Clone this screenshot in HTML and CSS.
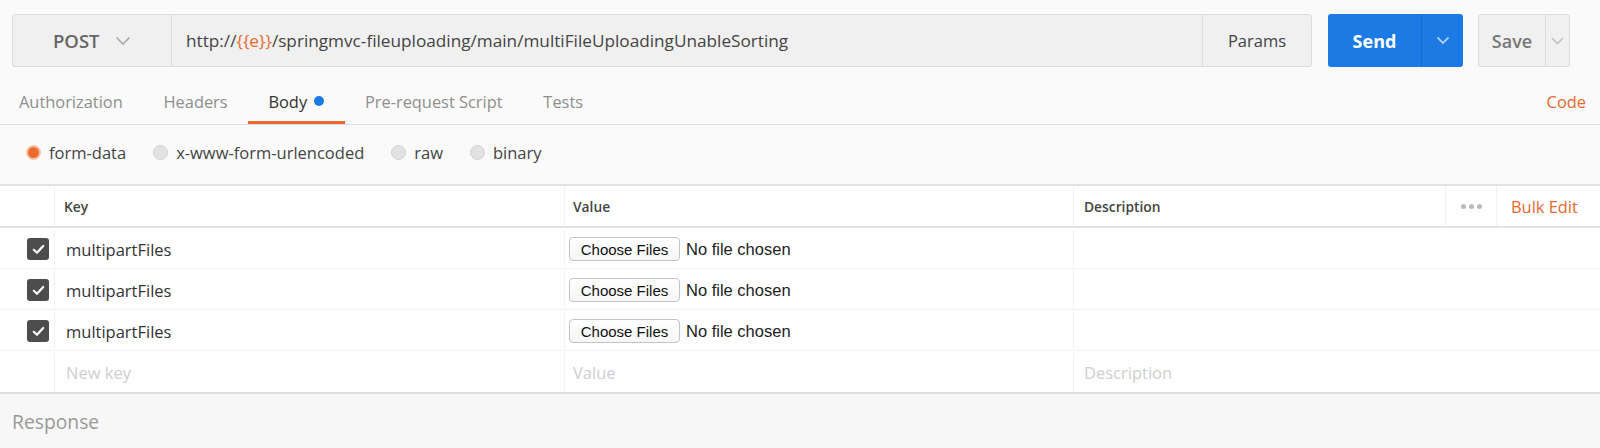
FILE: index.html
```html
<!DOCTYPE html>
<html>
<head>
<meta charset="utf-8">
<link rel="stylesheet" href="styles.css">
</head>
<body>
<div class="page">
  <div class="topbar">
    <div class="reqbar">
      <div class="method">POST <svg class="chev" width="16" height="10" viewBox="0 0 16 10"><path d="M1.5 1.5 L8 8 L14.5 1.5" fill="none" stroke="#aaa" stroke-width="1.6"/></svg></div>
      <div class="url">http://<span class="var">{{e}}</span>/springmvc-fileuploading/main/multiFileUploadingUnableSorting</div>
      <div class="params">Params</div>
    </div>
    <div class="send">
      <div class="send-main">Send</div>
      <div class="send-caret"><svg width="14" height="9" viewBox="0 0 14 9"><path d="M1.5 1.5 L7 7 L12.5 1.5" fill="none" stroke="#a9cdf5" stroke-width="1.8"/></svg></div>
    </div>
    <div class="save">
      <div class="save-main">Save</div>
      <div class="save-caret"><svg width="13" height="8" viewBox="0 0 13 8"><path d="M1 1 L6.5 6.5 L12 1" fill="none" stroke="#bbb" stroke-width="1.3"/></svg></div>
    </div>
  </div>

  <div class="tabs">
    <div class="tab">Authorization</div>
    <div class="tab">Headers</div>
    <div class="tab active">Body <span class="dot"></span></div>
    <div class="tab">Pre-request Script</div>
    <div class="tab">Tests</div>
    <div class="spacer"></div>
    <div class="code">Code</div>
  </div>

  <div class="radios">
    <div class="radio"><span class="circle on"></span>form-data</div>
    <div class="radio"><span class="circle"></span>x-www-form-urlencoded</div>
    <div class="radio"><span class="circle"></span>raw</div>
    <div class="radio"><span class="circle"></span>binary</div>
  </div>

  <div class="table">
    <div class="row head">
      <div class="c-check"></div>
      <div class="c-key">Key</div>
      <div class="c-val">Value</div>
      <div class="c-desc">Description</div>
      <div class="c-dots"><span></span><span></span><span></span></div>
      <div class="c-bulk">Bulk Edit</div>
    </div>
    <div class="row">
      <div class="c-check"><span class="cb"><svg width="13" height="11" viewBox="0 0 13 11"><path d="M1.8 5.8 L5 8.8 L11.2 2" fill="none" stroke="#fff" stroke-width="2.2" stroke-linecap="round" stroke-linejoin="round"/></svg></span></div>
      <div class="c-key">multipartFiles</div>
      <div class="c-val"><button class="choose">Choose Files</button><span class="nofile">No file chosen</span></div>
      <div class="c-desc"></div>
    </div>
    <div class="row">
      <div class="c-check"><span class="cb"><svg width="13" height="11" viewBox="0 0 13 11"><path d="M1.8 5.8 L5 8.8 L11.2 2" fill="none" stroke="#fff" stroke-width="2.2" stroke-linecap="round" stroke-linejoin="round"/></svg></span></div>
      <div class="c-key">multipartFiles</div>
      <div class="c-val"><button class="choose">Choose Files</button><span class="nofile">No file chosen</span></div>
      <div class="c-desc"></div>
    </div>
    <div class="row">
      <div class="c-check"><span class="cb"><svg width="13" height="11" viewBox="0 0 13 11"><path d="M1.8 5.8 L5 8.8 L11.2 2" fill="none" stroke="#fff" stroke-width="2.2" stroke-linecap="round" stroke-linejoin="round"/></svg></span></div>
      <div class="c-key">multipartFiles</div>
      <div class="c-val"><button class="choose">Choose Files</button><span class="nofile">No file chosen</span></div>
      <div class="c-desc"></div>
    </div>
    <div class="row last">
      <div class="c-check"></div>
      <div class="c-key ph">New key</div>
      <div class="c-val ph">Value</div>
      <div class="c-desc ph">Description</div>
    </div>
  </div>

  <div class="response">Response</div>
</div>
</body>
</html>
```

FILE: styles.css
```css
* { box-sizing: border-box; }
html, body { margin: 0; padding: 0; }
body {
  background: #fafafa;
  font-family: "Open Sans", "Noto Sans", sans-serif;
  color: #333;
  width: 1600px;
  height: 448px;
  overflow: hidden;
}
.page { display: flex; flex-direction: column; }

.topbar {
  display: flex;
  align-items: stretch;
  padding: 14px 30px 0 12px;
  height: 67px;
}
.reqbar {
  flex: 1;
  display: flex;
  border: 1px solid #dcdcdc;
  border-radius: 3px;
  background: #f0f0f0;
}
.method {
  width: 159px;
  display: flex;
  align-items: center;
  padding-left: 40px;
  font-size: 18.5px;
  font-weight: 600;
  color: #666;
  border-right: 1px solid #dcdcdc;
}
.chev { margin-left: 15px; }
.url {
  flex: 1;
  display: flex;
  align-items: center;
  padding-left: 14px;
  font-size: 17.2px;
  color: #444;
  white-space: nowrap;
}
.var { color: #e8692f; }
.params {
  width: 109px;
  display: flex;
  align-items: center;
  justify-content: center;
  border-left: 1px solid #dcdcdc;
  font-size: 16.5px;
  color: #444;
}
.send {
  margin-left: 16px;
  width: 135px;
  display: flex;
  background: #1b7ae4;
  border-radius: 3px;
  color: #fff;
}
.send-main {
  width: 94px;
  display: flex;
  align-items: center;
  justify-content: center;
  font-size: 18px;
  font-weight: 700;
  border-right: 1px solid #1869c4;
}
.send-caret {
  flex: 1;
  display: flex;
  align-items: center;
  justify-content: center;
}
.save {
  margin-left: 15px;
  width: 92px;
  display: flex;
  background: #f0f0f0;
  border: 1px solid #dcdcdc;
  border-radius: 3px;
}
.save-main {
  width: 67px;
  display: flex;
  align-items: center;
  justify-content: center;
  font-size: 18px;
  font-weight: 600;
  color: #777;
  border-right: 1px solid #dcdcdc;
}
.save-caret {
  flex: 1;
  display: flex;
  align-items: center;
  justify-content: center;
}

.tabs {
  display: flex;
  align-items: stretch;
  height: 58px;
  border-bottom: 1px solid #dedede;
  padding: 0 14px 0 0;
}
.tab {
  display: flex;
  align-items: center;
  padding: 14px 20.4px 0;
  font-size: 16.4px;
  color: #8f8f8f;
  border-bottom: 3px solid transparent;
}
.tab:first-child { padding-left: 19px; }
.tab.active { color: #333; border-bottom-color: #e8692f; }
.dot {
  display: inline-block;
  width: 10px;
  height: 10px;
  border-radius: 50%;
  background: #1a7be8;
  margin-left: 7px;
}
.spacer { flex: 1; }
.code {
  display: flex;
  align-items: center;
  padding-top: 11px;
  font-size: 16.4px;
  color: #e8692f;
}

.radios {
  display: flex;
  align-items: center;
  height: 59px;
  padding-left: 26px;
  padding-bottom: 5px;
  font-size: 16.5px;
  color: #444;
}
.radio {
  display: flex;
  align-items: center;
  margin-right: 27px;
}
.circle {
  width: 15px;
  height: 15px;
  border-radius: 50%;
  background: #e2e2e2;
  border: 1px solid #d2d2d2;
  margin-right: 8px;
}
.circle.on {
  background: #ee6b2f;
  border: 2px solid #f4c4a8;
}

.table {
  background: #fff;
  border-top: 2px solid #e3e3e3;
  border-bottom: 2px solid #e0e0e0;
}
.row {
  display: flex;
  height: 41px;
  padding-top: 2px;
  border-bottom: 1px solid #f2f2f2;
  font-size: 16.5px;
  color: #333;
}
.row.head {
  height: 42px;
  padding-top: 0;
  border-bottom: 2px solid #e3e3e3;
  font-size: 13.8px;
  font-weight: 600;
  color: #444;
}
.row.last { border-bottom: none; }
.row > div {
  display: flex;
  align-items: center;
  border-right: 1px solid #f2f2f2;
}
.c-check { width: 55px; justify-content: flex-end; padding-right: 5px; }
.c-key { width: 510px; padding-left: 11px; }
.row.head .c-key { padding-left: 9px; }
.c-val { width: 509px; padding-left: 4px; }
.row.head .c-val, .c-val.ph { padding-left: 8px; }
.c-desc { flex: 1; padding-left: 10px; border-right: none !important; }
.row.head .c-desc { flex: none; width: 372px; border-right: 1px solid #f2f2f2 !important; }
.c-dots { width: 51px; justify-content: center; gap: 3px; }
.c-dots span { width: 5px; height: 5px; border-radius: 50%; background: #bbb; }
.c-bulk { flex: 1; padding-left: 14px; color: #e8692f; font-weight: 400; font-size: 16.4px; border-right: none !important; }
.ph { color: #cfcfcf; }

.cb {
  width: 22px;
  height: 22px;
  border-radius: 3px;
  background: #4d4d4d;
  display: flex;
  align-items: center;
  justify-content: center;
}
.choose {
  font-family: "Liberation Sans", Arial, sans-serif;
  font-size: 15px;
  color: #111;
  background: linear-gradient(#fff, #f6f6f6);
  border: 1px solid #c4c4c4;
  border-radius: 4px;
  height: 24px;
  width: 111px;
  padding: 0;
}
.nofile {
  font-family: "Liberation Sans", Arial, sans-serif;
  font-size: 16.5px;
  color: #222;
  margin-left: 6px;
}

.response {
  background: #f7f7f7;
  height: 60px;
  padding: 14px 12px 0;
  font-size: 19.3px;
  color: #999;
}
```
